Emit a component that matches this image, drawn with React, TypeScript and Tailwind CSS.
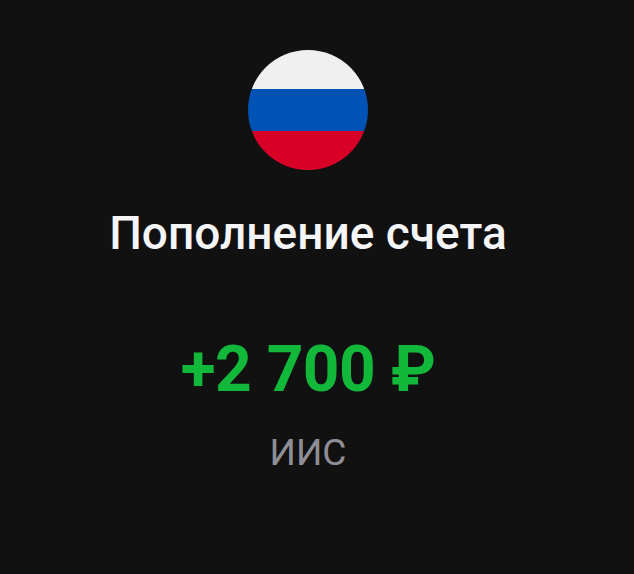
import React from 'react';

function RussiaFlag() {
  return (
    <div className="w-[120px] h-[120px] rounded-full overflow-hidden flex flex-col">
      <div className="h-[39px] bg-[#f0f0f0]" />
      <div className="h-[42px] bg-[#0052b4]" />
      <div className="h-[39px] bg-[#d80027]" />
    </div>
  );
}

export default function App() {
  return (
    <div className="w-[634px] h-[574px] bg-[#111112] flex flex-col items-center pt-[50px] pr-[18px] font-['Roboto',sans-serif]">
      <RussiaFlag />
      <h1 className="mt-[34px] text-[46px] leading-[58px] font-medium text-[#f5f5f7] whitespace-nowrap">Пополнение счета</h1>
      <div className="mt-[75px] text-[64px] leading-[66px] font-bold tracking-[-0.5px] text-[#12b83a] whitespace-nowrap">+2 700 ₽</div>
      <div className="mt-[28px] text-[37px] leading-[44px] text-[#8e8e96]">ИИС</div>
    </div>
  );
}
